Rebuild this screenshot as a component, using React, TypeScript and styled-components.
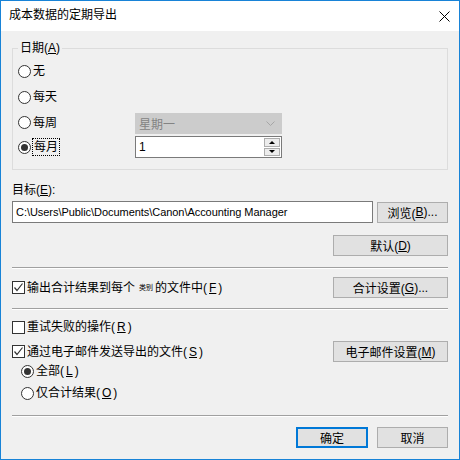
import React from 'react';
import styled, { createGlobalStyle } from 'styled-components';

const FONT = `"Liberation Sans", "Noto Sans CJK SC", sans-serif`;

const Global = createGlobalStyle`
  html, body { margin: 0; padding: 0; background: #ffffff; }
  body {
    font-family: ${FONT};
    font-size: 12px;
    color: #000;
  }
  * { box-sizing: border-box; }
`;

const Window = styled.div`
  width: 460px;
  height: 460px;
  border: 1px solid #1883d7;
  display: flex;
  flex-direction: column;
  background: #f0f0f0;
`;

const TitleBar = styled.div`
  height: 30px;
  flex: none;
  background: #ffffff;
  display: flex;
  align-items: center;
  justify-content: space-between;
  padding-left: 8px;
`;

const Title = styled.span`
  font-family: ${FONT};
  font-size: 12px;
  line-height: 16px;
  margin-top: -2px;
`;

const CloseButton = styled.div`
  width: 30px;
  height: 30px;
  display: flex;
  align-items: center;
  justify-content: center;
`;

const Body = styled.div`
  flex: 1;
  display: flex;
  flex-direction: column;
  padding: 9px 11px 11px 11px;
`;

const Group = styled.fieldset`
  margin: 0;
  padding: 3px 0 11px 5px;
  border: 1px solid #dcdcdc;
  min-width: 0;
`;

const Legend = styled.legend`
  padding: 0 2px;
  margin-left: 0;
  line-height: 16px;
  font-size: 12px;
  font-family: ${FONT};
`;

const PeriodGrid = styled.div`
  display: grid;
  grid-template-columns: 117px 147px;
  grid-template-rows: 24px 24px 23px 22px;
  row-gap: 2px;
  align-items: center;
`;

const ChoiceLabel = styled.label<{ $indent?: number; $row?: number }>`
  display: flex;
  align-items: center;
  gap: 2px;
  padding-left: ${p => p.$indent ?? 0}px;
  font-family: ${FONT};
  font-size: 12px;
  line-height: 16px;
  white-space: nowrap;
  grid-column: 1;
  grid-row: ${p => p.$row ?? 'auto'};
`;

const RadioCircle = styled.span<{ $checked?: boolean }>`
  width: 13px;
  height: 13px;
  flex: none;
  border-radius: 50%;
  border: 1px solid #333;
  background: #fff;
  display: flex;
  align-items: center;
  justify-content: center;
  &::after {
    content: '';
    width: 7px;
    height: 7px;
    border-radius: 50%;
    background: #333;
    display: ${p => (p.$checked ? 'block' : 'none')};
  }
`;

const CheckBox = styled.span`
  width: 13px;
  height: 13px;
  flex: none;
  border: 1px solid #333;
  background: #fff;
  display: flex;
  align-items: center;
  justify-content: center;
`;

const Focus = styled.span`
  outline: 1px dotted #000;
  padding: 0 1px;
`;

const Combo = styled.div`
  grid-column: 2;
  grid-row: 3;
  align-self: end;
  height: 21px;
  background: #cccccc;
  border: 1px solid #cccccc;
  color: #838383;
  display: flex;
  align-items: center;
  justify-content: space-between;
  padding: 0 6px 0 3px;
`;

const SpinBox = styled.div`
  grid-column: 2;
  grid-row: 4;
  height: 22px;
  background: #fff;
  border: 1px solid #7a7a7a;
  display: flex;
  align-items: stretch;
  padding-left: 3px;
`;

const SpinValue = styled.span`
  flex: 1;
  display: flex;
  align-items: center;
`;

const SpinButtons = styled.div`
  width: 17px;
  display: flex;
  flex-direction: column;
  gap: 1px;
  padding: 1px 1px 1px 0;
`;

const SpinButton = styled.div`
  flex: 1;
  background: #ececec;
  border: 1px solid #adadad;
  display: flex;
  align-items: center;
  justify-content: center;
`;

const Arrow = styled.span<{ $up?: boolean }>`
  width: 0;
  height: 0;
  border-left: 3px solid transparent;
  border-right: 3px solid transparent;
  ${p => (p.$up ? 'border-bottom: 3px solid #000;' : 'border-top: 3px solid #000;')}
`;

const FieldLabel = styled.div`
  margin-top: 12px;
  line-height: 16px;
`;

const PathRow = styled.div`
  display: flex;
  gap: 4px;
  margin-top: 3px;
  height: 22px;
`;

const TextInput = styled.div`
  flex: 1;
  background: #fff;
  border: 1px solid #7a7a7a;
  padding: 0 3px;
  display: flex;
  align-items: center;
  font-size: 11px;
  letter-spacing: -0.05px;
  white-space: nowrap;
  overflow: hidden;
`;

const Button = styled.button<{ $w: number; $primary?: boolean }>`
  width: ${p => p.$w}px;
  height: 21px;
  flex: none;
  align-self: center;
  margin: 0;
  padding: 0;
  background: #e1e1e1;
  border: 1px solid ${p => (p.$primary ? '#0078d7' : '#adadad')};
  box-shadow: ${p => (p.$primary ? 'inset 0 0 0 1px #0078d7' : 'none')};
  font-family: ${FONT};
  font-size: 12px;
  color: #000;
  display: flex;
  align-items: center;
  justify-content: center;
  white-space: nowrap;
`;

const RightRow = styled.div<{ $mt: number }>`
  display: flex;
  justify-content: flex-end;
  gap: 9px;
  margin-top: ${p => p.$mt}px;
`;

const Separator = styled.div<{ $mt: number }>`
  margin-top: ${p => p.$mt}px;
  border-top: 1px solid #a0a0a0;
  border-bottom: 1px solid #ffffff;
`;

const OptionRow = styled.div<{ $mt?: number; $h: number }>`
  display: flex;
  align-items: center;
  justify-content: space-between;
  height: ${p => p.$h}px;
  margin-top: ${p => p.$mt ?? 0}px;
`;

const Tiny = styled.span`
  font-size: 7px;
  vertical-align: middle;
  margin: 0 0 0 2px;
`;

const Check = () => (
  <CheckBox>
    <svg width="11" height="11" viewBox="0 0 11 11">
      <polyline points="1.5,5.5 4,8.5 9.5,1.5" fill="none" stroke="#333" strokeWidth="1.2" />
    </svg>
  </CheckBox>
);

export default function App() {
  return (
    <>
      <Global />
      <Window>
        <TitleBar>
          <Title>成本数据的定期导出</Title>
          <CloseButton>
            <svg width="11" height="11" viewBox="0 0 11 11">
              <path d="M0.5 0.5 L10.5 10.5 M10.5 0.5 L0.5 10.5" stroke="#000" strokeWidth="1" />
            </svg>
          </CloseButton>
        </TitleBar>
        <Body>
          <Group>
            <Legend>日期(<u>A</u>)</Legend>
            <PeriodGrid>
              <ChoiceLabel $row={1}><RadioCircle />无</ChoiceLabel>
              <ChoiceLabel $row={2}><RadioCircle />每天</ChoiceLabel>
              <ChoiceLabel $row={3}><RadioCircle />每周</ChoiceLabel>
              <Combo>
                <span>星期一</span>
                <svg width="9" height="6" viewBox="0 0 9 6">
                  <polyline points="0.5,0.5 4.5,4.5 8.5,0.5" fill="none" stroke="#a6a6a6" strokeWidth="1" />
                </svg>
              </Combo>
              <ChoiceLabel $row={4}><RadioCircle $checked /><Focus>每月</Focus></ChoiceLabel>
              <SpinBox>
                <SpinValue>1</SpinValue>
                <SpinButtons>
                  <SpinButton><Arrow $up /></SpinButton>
                  <SpinButton><Arrow /></SpinButton>
                </SpinButtons>
              </SpinBox>
            </PeriodGrid>
          </Group>

          <FieldLabel>目标(<u>E</u>):</FieldLabel>
          <PathRow>
            <TextInput>C:\Users\Public\Documents\Canon\Accounting Manager</TextInput>
            <Button $w={71}>浏览(<u>B</u>)...</Button>
          </PathRow>
          <RightRow $mt={12}>
            <Button $w={115}>默认(<u>D</u>)</Button>
          </RightRow>

          <Separator $mt={11} />

          <OptionRow $mt={8} $h={21}>
            <ChoiceLabel><Check />输出合计结果到每个<Tiny>类别</Tiny>的文件中(<u>F</u>)</ChoiceLabel>
            <Button $w={115}>合计设置(<u>G</u>)...</Button>
          </OptionRow>

          <Separator $mt={10} />

          <OptionRow $mt={7} $h={20}>
            <ChoiceLabel><CheckBox />重试失败的操作(<u>R</u>)</ChoiceLabel>
          </OptionRow>
          <OptionRow $mt={4} $h={21}>
            <ChoiceLabel><Check />通过电子邮件发送导出的文件(<u>S</u>)</ChoiceLabel>
            <Button $w={115}>电子邮件设置(<u>M</u>)</Button>
          </OptionRow>
          <OptionRow $h={18}>
            <ChoiceLabel $indent={9}><RadioCircle $checked />全部(<u>L</u>)</ChoiceLabel>
          </OptionRow>
          <OptionRow $mt={4} $h={18}>
            <ChoiceLabel $indent={9}><RadioCircle />仅合计结果(<u>O</u>)</ChoiceLabel>
          </OptionRow>

          <Separator $mt={13} />

          <RightRow $mt={10}>
            <Button $w={72} $primary>确定</Button>
            <Button $w={71}>取消</Button>
          </RightRow>
        </Body>
      </Window>
    </>
  );
}
